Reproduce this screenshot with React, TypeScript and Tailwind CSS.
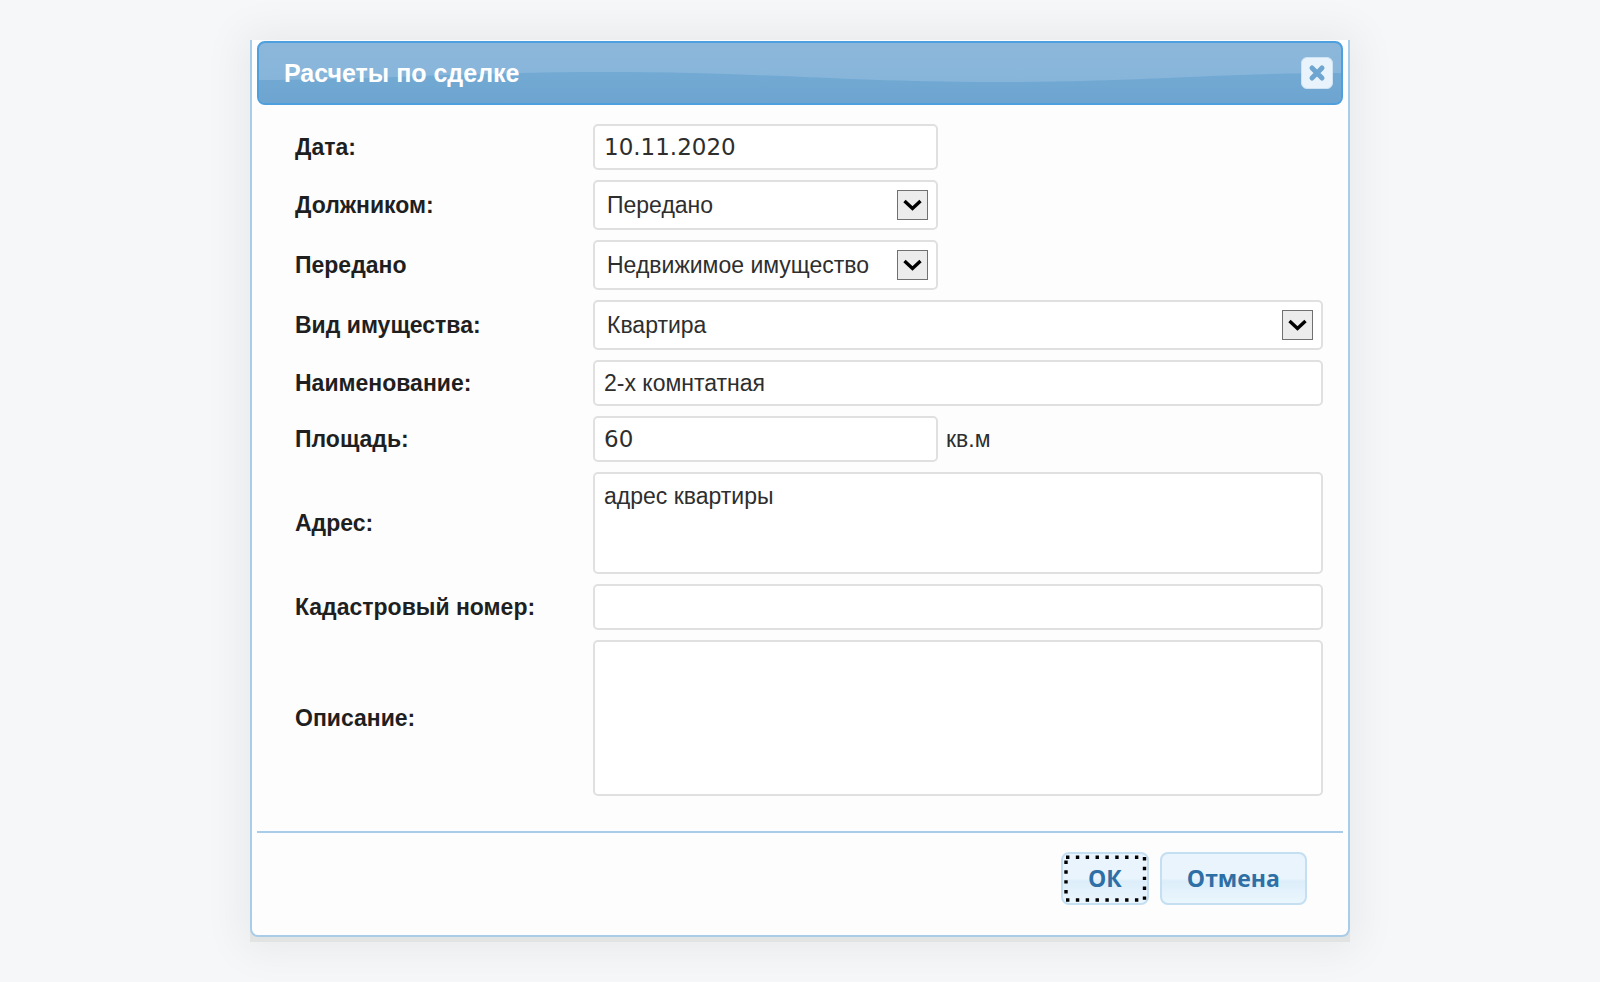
import React, { useState } from 'react';

const inputClass =
  'block h-[46px] rounded-[5px] border-2 border-[#e0e0e0] bg-white px-[9px] text-[#2e2e2e] focus:outline-none';

const Label: React.FC<{ htmlFor: string; children: React.ReactNode }> = ({ htmlFor, children }) => (
  <label htmlFor={htmlFor} className="self-center font-bold text-[#1f1f1f]">
    {children}
  </label>
);

interface SelectFieldProps {
  id: string;
  options: string[];
  className: string;
}

const SelectField: React.FC<SelectFieldProps> = ({ id, options, className }) => (
  <div className={`relative ${className}`}>
    <select
      id={id}
      className="block h-[50px] w-full appearance-none rounded-[5px] border-2 border-[#e0e0e0] bg-white pr-12 pl-3 text-[#2e2e2e] focus:outline-none"
    >
      {options.map((option) => (
        <option key={option}>{option}</option>
      ))}
    </select>
    <span className="pointer-events-none absolute top-[10px] right-[10px] flex h-[30px] w-[31px] items-center justify-center border border-[#707070] bg-[#ececec]">
      <svg width="19" height="12" viewBox="0 0 19 12" fill="none">
        <path d="M1.5 2 L9.5 9.5 L17.5 2" stroke="#000" strokeWidth="3.4" />
      </svg>
    </span>
  </div>
);

const App: React.FC = () => {
  const [date, setDate] = useState('10.11.2020');
  const [name, setName] = useState('2-х комнтатная');
  const [area, setArea] = useState('60');
  const [address, setAddress] = useState('адрес квартиры');
  const [cadastral, setCadastral] = useState('');
  const [description, setDescription] = useState('');

  return (
    <main className="min-h-screen bg-[#f5f7f9] pt-10 pb-10 font-['Liberation_Sans',Arial,sans-serif] text-[23px] leading-7">
      <div className="mx-auto w-full max-w-[1100px] bg-[#e2e4e4] pb-[5px] shadow-[0_0_40px_8px_rgba(0,0,0,0.06)]">
        <section
          role="dialog"
          aria-labelledby="dialog-title"
          className="rounded-b-lg border-x-2 border-b-2 border-[#a9cde8] bg-[#fdfdfd] px-[5px] pt-px"
        >
          <header className="relative flex h-16 items-center justify-between overflow-hidden rounded-lg border-2 border-[#4d9fdd] bg-linear-to-b from-[#8cb7da] to-[#84b4da] pr-2 pl-[25px]">
            <svg
              className="absolute inset-0 h-full w-full"
              viewBox="0 0 1082 60"
              preserveAspectRatio="none"
            >
              <defs>
                <linearGradient id="wave" x1="0" y1="0" x2="0" y2="1">
                  <stop offset="0" stopColor="#72aad4" />
                  <stop offset="1" stopColor="#6da5d0" />
                </linearGradient>
              </defs>
              <path
                d="M0 37 C110 37 210 29 350 29 C500 29 590 39 735 39 C880 39 960 30 1082 30 V60 H0 Z"
                fill="url(#wave)"
              />
            </svg>
            <h1 id="dialog-title" className="relative text-[25px] font-bold text-white">
              Расчеты по сделке
            </h1>
            <button
              type="button"
              aria-label="Закрыть"
              className="relative flex h-8 w-8 items-center justify-center rounded-md border border-[#cde3f3] bg-[#e9f3fb]"
            >
              <svg width="18" height="18" viewBox="0 0 18 18" fill="none">
                <path
                  d="M4 4 L14 14 M14 4 L4 14"
                  stroke="#6ea6d1"
                  strokeWidth="5"
                  strokeLinecap="round"
                />
              </svg>
            </button>
          </header>

          <form onSubmit={(e) => e.preventDefault()}>
            <div className="grid grid-cols-[298px_1fr] gap-y-2.5 pt-[19px] pr-5 pb-[35px] pl-[38px]">
              <Label htmlFor="date">Дата:</Label>
              <input
                id="date"
                type="text"
                value={date}
                onChange={(e) => setDate(e.target.value)}
                className={`${inputClass} w-[345px] font-['DejaVu_Sans',sans-serif]`}
              />

              <Label htmlFor="debtor">Должником:</Label>
              <SelectField id="debtor" options={['Передано', 'Получено']} className="w-[345px]" />

              <Label htmlFor="transferred">Передано</Label>
              <SelectField
                id="transferred"
                options={['Недвижимое имущество', 'Движимое имущество']}
                className="w-[345px]"
              />

              <Label htmlFor="kind">Вид имущества:</Label>
              <SelectField id="kind" options={['Квартира', 'Дом']} className="w-full" />

              <Label htmlFor="name">Наименование:</Label>
              <input
                id="name"
                type="text"
                value={name}
                onChange={(e) => setName(e.target.value)}
                className={`${inputClass} w-full`}
              />

              <Label htmlFor="area">Площадь:</Label>
              <div className="flex items-center gap-2">
                <input
                  id="area"
                  type="text"
                  value={area}
                  onChange={(e) => setArea(e.target.value)}
                  className={`${inputClass} w-[345px] font-['DejaVu_Sans',sans-serif]`}
                />
                <span className="text-[#2e2e2e]">кв.м</span>
              </div>

              <Label htmlFor="address">Адрес:</Label>
              <textarea
                id="address"
                value={address}
                onChange={(e) => setAddress(e.target.value)}
                className="block h-[102px] w-full resize-none rounded-[5px] border-2 border-[#e0e0e0] bg-white px-[9px] pt-2 text-[#2e2e2e] focus:outline-none"
              />

              <Label htmlFor="cadastral">Кадастровый номер:</Label>
              <input
                id="cadastral"
                type="text"
                value={cadastral}
                onChange={(e) => setCadastral(e.target.value)}
                className={`${inputClass} w-full`}
              />

              <Label htmlFor="description">Описание:</Label>
              <textarea
                id="description"
                value={description}
                onChange={(e) => setDescription(e.target.value)}
                className="block h-[156px] w-full resize-none rounded-[5px] border-2 border-[#e0e0e0] bg-white px-[9px] pt-2 text-[#2e2e2e] focus:outline-none"
              />
            </div>

            <footer className="flex justify-end gap-[11px] border-t-2 border-[#a9cde8] pt-[19px] pr-9 pb-[30px] font-['Open_Sans',sans-serif] text-[23px] font-bold text-[#2e6fa5]">
              <button
                type="submit"
                className="relative h-[53px] w-[88px] rounded-lg border-2 border-[#c3dff1] bg-linear-to-b from-[#eaf4fd] from-50% via-[#dceefa] via-55% to-[#ebf6fd] pb-0.5"
              >
                ОК
                <svg
                  className="absolute -top-0.5 -left-0.5"
                  width="88"
                  height="53"
                  viewBox="0 0 88 53"
                  stroke="#000"
                  strokeWidth="3.4"
                  strokeDasharray="3.4 6.45"
                >
                  <path d="M5 5.3 H78" />
                  <path d="M5 48 H78" />
                  <path d="M83.5 5 V50" />
                  <path d="M5 8.5 V43" />
                </svg>
              </button>
              <button
                type="button"
                className="h-[53px] rounded-lg border-2 border-[#c3dff1] bg-linear-to-b from-[#eaf4fd] from-50% via-[#dceefa] via-55% to-[#ebf6fd] px-[25px] pb-0.5"
              >
                Отмена
              </button>
            </footer>
          </form>
        </section>
      </div>
    </main>
  );
};

export default App;
